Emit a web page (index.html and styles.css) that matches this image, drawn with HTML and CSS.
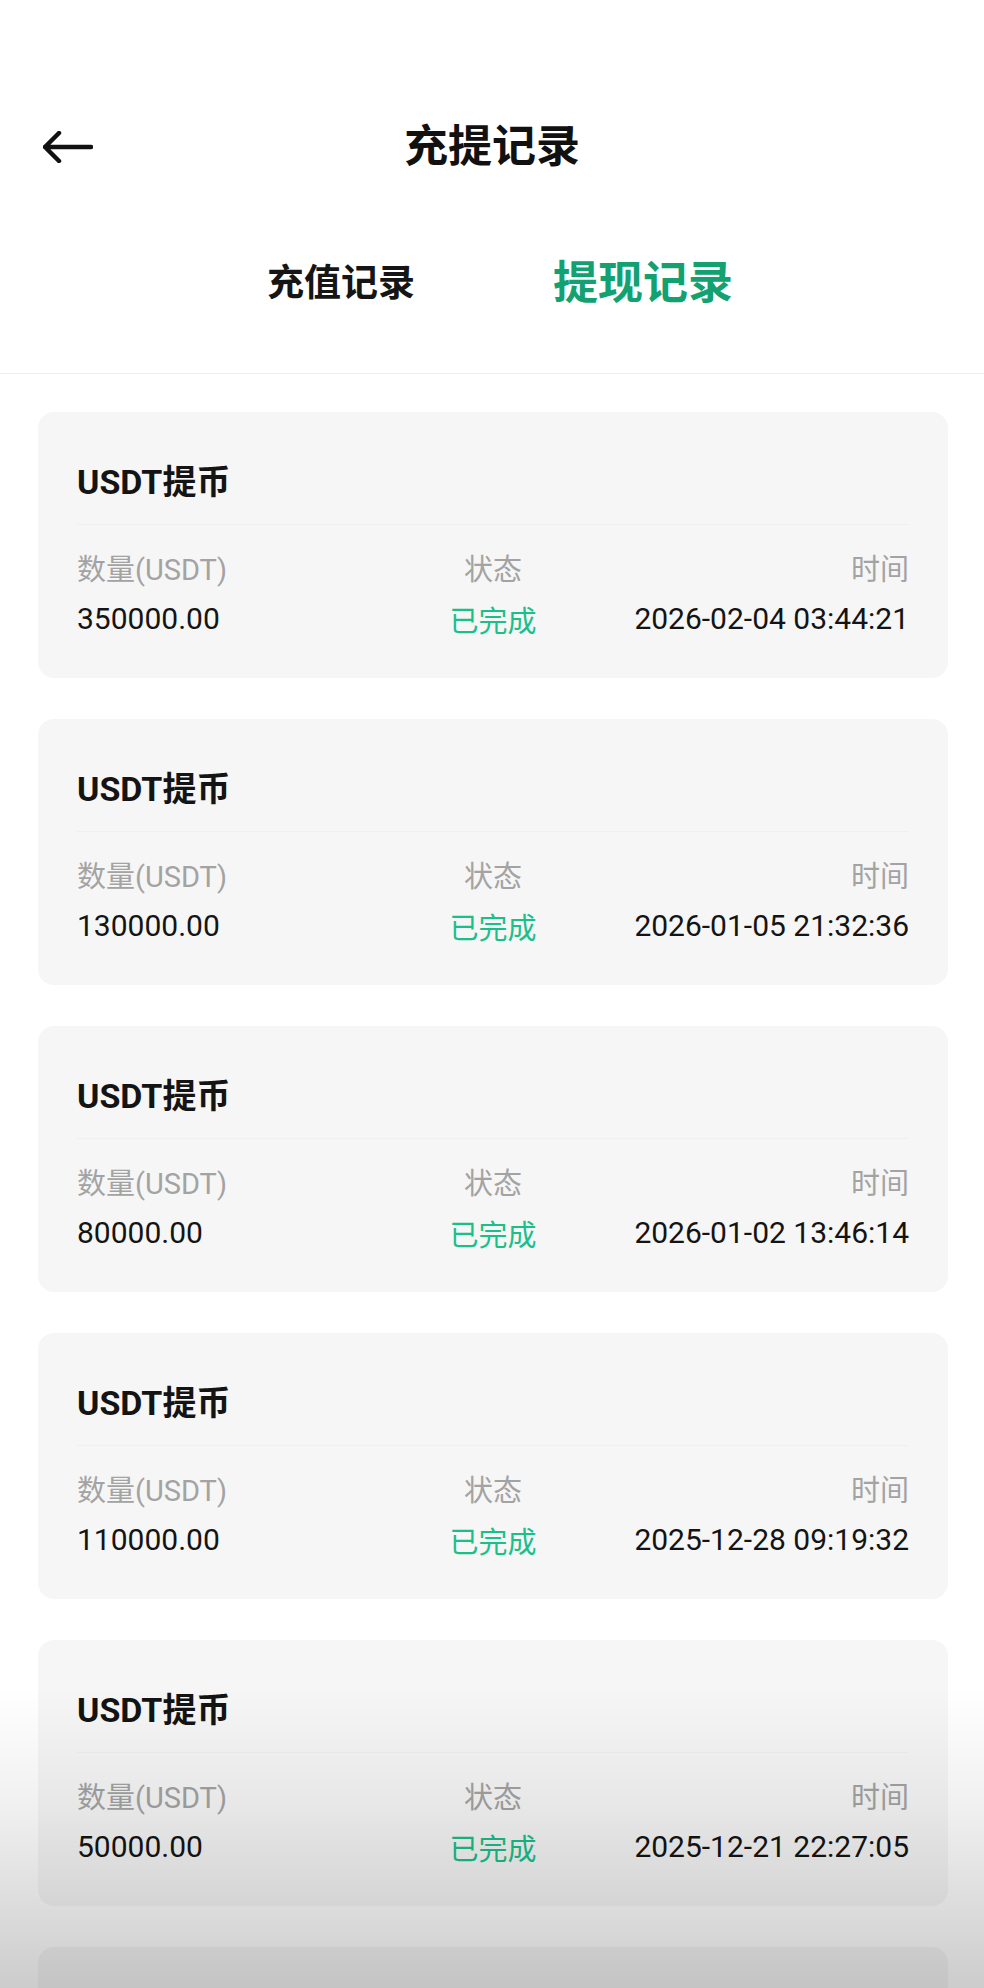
FILE: index.html
```html
<!DOCTYPE html>
<html lang="zh-CN">
<head>
    <meta charset="UTF-8">
    <meta name="viewport" content="width=device-width, initial-scale=1.0">
    <title>充提记录</title>
    <link rel="stylesheet" href="styles.css">
</head>
<body>
    <div class="page">
        <div class="nav">
            <div class="nav-left">
                <svg class="back" width="50" height="32" viewBox="0 0 50 32">
                    <path d="M16 2 L2 16 L16 30 M2 16 H48" fill="none" stroke="#111" stroke-width="4.5" stroke-linecap="round" stroke-linejoin="round"/>
                </svg>
            </div>
            <div class="nav-title">充提记录</div>
            <div class="nav-right"></div>
        </div>

        <div class="tabs">
            <div class="tab">充值记录</div>
            <div class="tab active">提现记录</div>
        </div>

        <div class="list">
            <div class="card">
                <div class="card-title">USDT提币</div>
                <div class="card-body">
                    <div class="col col-left">
                        <span class="label">数量(USDT)</span>
                        <span class="value">350000.00</span>
                    </div>
                    <div class="col col-center">
                        <span class="label">状态</span>
                        <span class="value status">已完成</span>
                    </div>
                    <div class="col col-right">
                        <span class="label">时间</span>
                        <span class="value">2026-02-04 03:44:21</span>
                    </div>
                </div>
            </div>
            <div class="card">
                <div class="card-title">USDT提币</div>
                <div class="card-body">
                    <div class="col col-left">
                        <span class="label">数量(USDT)</span>
                        <span class="value">130000.00</span>
                    </div>
                    <div class="col col-center">
                        <span class="label">状态</span>
                        <span class="value status">已完成</span>
                    </div>
                    <div class="col col-right">
                        <span class="label">时间</span>
                        <span class="value">2026-01-05 21:32:36</span>
                    </div>
                </div>
            </div>
            <div class="card">
                <div class="card-title">USDT提币</div>
                <div class="card-body">
                    <div class="col col-left">
                        <span class="label">数量(USDT)</span>
                        <span class="value">80000.00</span>
                    </div>
                    <div class="col col-center">
                        <span class="label">状态</span>
                        <span class="value status">已完成</span>
                    </div>
                    <div class="col col-right">
                        <span class="label">时间</span>
                        <span class="value">2026-01-02 13:46:14</span>
                    </div>
                </div>
            </div>
            <div class="card">
                <div class="card-title">USDT提币</div>
                <div class="card-body">
                    <div class="col col-left">
                        <span class="label">数量(USDT)</span>
                        <span class="value">110000.00</span>
                    </div>
                    <div class="col col-center">
                        <span class="label">状态</span>
                        <span class="value status">已完成</span>
                    </div>
                    <div class="col col-right">
                        <span class="label">时间</span>
                        <span class="value">2025-12-28 09:19:32</span>
                    </div>
                </div>
            </div>
            <div class="card">
                <div class="card-title">USDT提币</div>
                <div class="card-body">
                    <div class="col col-left">
                        <span class="label">数量(USDT)</span>
                        <span class="value">50000.00</span>
                    </div>
                    <div class="col col-center">
                        <span class="label">状态</span>
                        <span class="value status">已完成</span>
                    </div>
                    <div class="col col-right">
                        <span class="label">时间</span>
                        <span class="value">2025-12-21 22:27:05</span>
                    </div>
                </div>
            </div>
            <!-- next card only peeks in at the bottom edge -->
            <div class="card card-peek"></div>
        </div>
    </div>
    <div class="bottom-shade"></div>
</body>
</html>
```

FILE: styles.css
```css
body {
    margin: 0;
    padding: 0;
    background-color: #ffffff;
    color: #1a1a1a;
    font-family: Roboto, "Noto Sans CJK SC", sans-serif;
    height: 1988px;
    overflow: hidden;
}
.page {
    width: 984px;
}
.nav {
    margin-top: 110px;
    height: 74px;
    display: grid;
    grid-template-columns: 1fr auto 1fr;
    align-items: center;
}
.nav-left {
    padding-left: 43px;
    display: flex;
    align-items: center;
}
.nav-title {
    font-size: 44px;
    font-weight: 700;
    color: #111111;
    line-height: 74px;
}
.tabs {
    display: flex;
    justify-content: center;
    padding: 70px 0 59px;
    border-bottom: 1px solid #ededed;
}
.tab {
    width: 302px;
    height: 60px;
    line-height: 60px;
    text-align: center;
    font-size: 37px;
    font-weight: 700;
    color: #151515;
}
.tab.active {
    font-size: 45px;
    color: #13a171;
}
.list {
    padding: 38px 36px 0 38px;
    display: flex;
    flex-direction: column;
    gap: 41px;
}
.card {
    background-color: #f6f6f6;
    border-radius: 16px;
    padding: 0 39px 41px;
}
.card-peek {
    height: 120px;
    padding: 0;
}
.card-title {
    padding-top: 50px;
    height: 40px;
    line-height: 40px;
    padding-bottom: 22px;
    border-bottom: 1px solid #f0f0f0;
    font-size: 34px;
    font-weight: 700;
    color: #141414;
}
.card-body {
    margin-top: 27px;
    display: grid;
    grid-template-columns: 1fr auto 1fr;
}
.col {
    display: flex;
    flex-direction: column;
    gap: 13px;
}
.col-center {
    align-items: center;
}
.col-right {
    align-items: flex-end;
}
.label {
    font-size: 29px;
    line-height: 36px;
    color: #a3a3a3;
}
.value {
    font-size: 30px;
    line-height: 36px;
    color: #141414;
}
.status {
    font-size: 29px;
    color: #1bbf8a;
    position: relative;
    top: 3px;
}
.bottom-shade {
    position: fixed;
    left: 0;
    right: 0;
    bottom: 0;
    height: 300px;
    pointer-events: none;
    background: linear-gradient(to bottom, rgba(0, 0, 0, 0) 0%, rgba(0, 0, 0, 0.06) 40%, rgba(0, 0, 0, 0.2) 100%);
}
```
